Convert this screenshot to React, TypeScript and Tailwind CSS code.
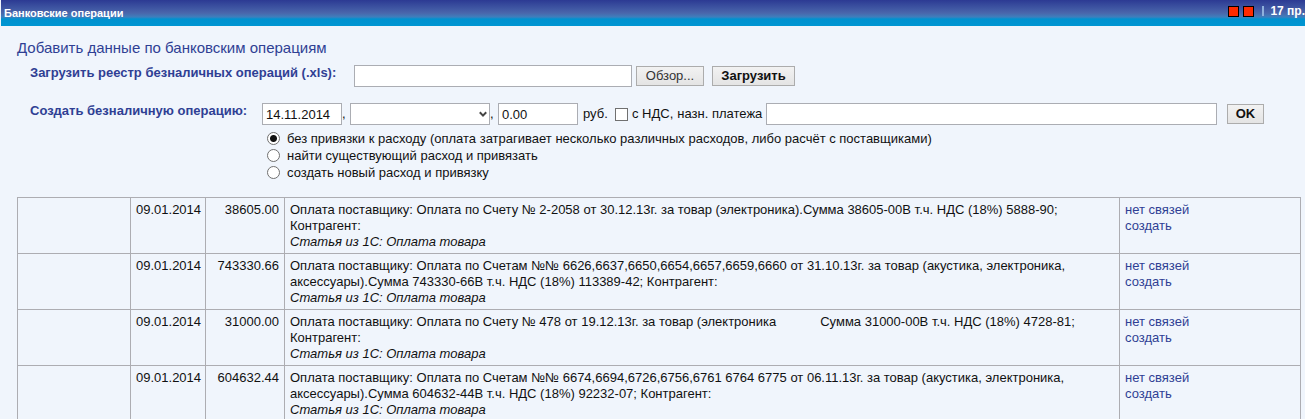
import React from "react";

const operations = [
  {
    amount: "38605.00",
    details: (
      <>
        Оплата поставщику: Оплата по Счету № 2-2058 от 30.12.13г. за товар
        (электроника).Сумма 38605-00В т.ч. НДС (18%) 5888-90;
        <br />
        Контрагент:
      </>
    ),
  },
  {
    amount: "743330.66",
    details: (
      <>
        Оплата поставщику: Оплата по Счетам №№
        6626,6637,6650,6654,6657,6659,6660 от 31.10.13г. за товар (акустика,
        электроника,
        <br />
        аксессуары).Сумма 743330-66В т.ч. НДС (18%) 113389-42; Контрагент:
      </>
    ),
  },
  {
    amount: "31000.00",
    details: (
      <>
        Оплата поставщику: Оплата по Счету № 478 от 19.12.13г. за товар
        (электроника
        <span className="inline-block w-11" />
        Сумма 31000-00В т.ч. НДС (18%) 4728-81;
        <br />
        Контрагент:
      </>
    ),
  },
  {
    amount: "604632.44",
    details: (
      <>
        Оплата поставщику: Оплата по Счетам №№ 6674,6694,6726,6756,6761 6764
        6775 от 06.11.13г. за товар (акустика, электроника,
        <br />
        аксессуары).Сумма 604632-44В т.ч. НДС (18%) 92232-07; Контрагент:
      </>
    ),
  },
];

const bindings = [
  "без привязки к расходу (оплата затрагивает несколько различных расходов, либо расчёт с поставщиками)",
  "найти существующий расход и привязать",
  "создать новый расход и привязку",
];

const field = "h-[22px] border border-[#abadb3] bg-white px-[3px]";
const button =
  "h-5 shrink-0 border border-[#acacac] bg-linear-to-b from-[#f2f2f2] to-[#e4e4e4] leading-4";
const cell = "border border-[#adadb2] px-[5px] pt-1 pb-[3px]";

function Header() {
  return (
    <header className="ml-px flex h-[26px] items-center justify-between bg-[linear-gradient(#2c3a93_0px,#4a66ab_13px,#3f7fbd_17px,#0091cf_19px,#0096d2_26px)] pl-[3px] text-[11px] font-bold text-white">
      <h1>Банковские операции</h1>
      <div className="flex items-center pb-1 text-xs">
        <span className="mr-1 size-[11px] border border-black bg-[#ff2a00]" />
        <span className="mr-2 size-[11px] border border-black bg-[#ff2a00]" />
        <span className="mr-[6px] h-[10px] w-0.5 bg-[#8fb0dc]" />
        <span>17 пр.</span>
      </div>
    </header>
  );
}

function UploadForm() {
  return (
    <form className="mt-2 flex h-[22px] items-center">
      <label
        htmlFor="registry"
        className="w-[324px] shrink-0 self-start font-bold text-[#2f3f94]"
      >
        Загрузить реестр безналичных операций (.xls):
      </label>
      <input id="registry" type="text" className={`${field} w-[278px]`} />
      <button type="button" className={`${button} ml-1 w-[68px] text-[#333]`}>
        Обзор...
      </button>
      <button type="button" className={`${button} ml-2 w-[83px] font-bold`}>
        Загрузить
      </button>
    </form>
  );
}

function CreateForm() {
  return (
    <form className="mt-4 mr-[37px]">
      <div className="flex h-[22px] items-center whitespace-nowrap">
        <label
          htmlFor="date"
          className="w-[232px] shrink-0 self-start font-bold text-[#2f3f94]"
        >
          Создать безналичную операцию:
        </label>
        <input
          id="date"
          type="text"
          defaultValue="14.11.2014"
          className={`${field} w-20`}
        />
        <span className="w-2 shrink-0">,</span>
        <div className="relative w-[140px] shrink-0">
          <select
            aria-label="Счёт"
            className={`${field} block w-full appearance-none`}
          />
          <svg
            viewBox="0 0 8 7"
            className="pointer-events-none absolute top-2 right-[3px] h-[7px] w-2"
          >
            <path
              d="M0.8 1.2 L4 4.6 L7.2 1.2"
              fill="none"
              stroke="#444"
              strokeWidth="2"
            />
          </svg>
        </div>
        <span className="w-2 shrink-0">,</span>
        <input
          aria-label="Сумма"
          type="text"
          defaultValue="0.00"
          className={`${field} w-20`}
        />
        <span className="w-[37px] shrink-0 pl-[5px]">руб.</span>
        <input
          id="vat"
          type="checkbox"
          className="size-[13px] shrink-0 appearance-none border border-[#707070] bg-white"
        />
        <label htmlFor="vat" className="pl-1">
          с НДС,
        </label>
        <label htmlFor="purpose" className="px-1">
          назн. платежа
        </label>
        <input
          id="purpose"
          type="text"
          className={`${field} min-w-0 flex-1`}
        />
        <button
          type="button"
          className={`${button} ml-[10px] w-[37px] font-bold`}
        >
          OK
        </button>
      </div>
      <div className="mt-[5px] ml-[237px]">
        {bindings.map((text, index) => (
          <label key={text} className="flex h-[17px] items-center gap-[7px]">
            <input
              type="radio"
              name="binding"
              defaultChecked={index === 0}
              className="size-[13px] appearance-none rounded-full border border-[#707070] bg-white checked:bg-[radial-gradient(circle,#111_3px,#fff_4px)]"
            />
            {text}
          </label>
        ))}
      </div>
    </form>
  );
}

function OperationsTable() {
  return (
    <table className="w-full table-fixed border-collapse">
      <colgroup>
        <col className="w-[113px]" />
        <col className="w-[75px]" />
        <col className="w-[79px]" />
        <col />
        <col className="w-[181px]" />
      </colgroup>
      <tbody>
        {operations.map((operation) => (
          <tr key={operation.amount} className="align-top">
            <td className={cell} />
            <td className={`${cell} text-right`}>09.01.2014</td>
            <td className={`${cell} text-right`}>{operation.amount}</td>
            <td className={cell}>
              {operation.details}
              <br />
              <i>Статья из 1С: Оплата товара</i>
            </td>
            <td className={`${cell} text-[#2f3f94]`}>
              <a href="#links" className="block">
                нет связей
              </a>
              <a href="#create" className="block">
                создать
              </a>
            </td>
          </tr>
        ))}
      </tbody>
    </table>
  );
}

export default function App() {
  return (
    <div className="h-screen overflow-hidden bg-[#f0f5fc] font-['Liberation_Sans',Arial,sans-serif] text-[13px] leading-4 text-[#111]">
      <Header />
      <main className="pt-3 pr-1 pl-[17px]">
        <h2 className="text-[15px] leading-[19px] text-[#2f3f94]">
          Добавить данные по банковским операциям
        </h2>
        <div className="pl-[13px]">
          <UploadForm />
          <CreateForm />
        </div>
        <div className="mt-4">
          <OperationsTable />
        </div>
      </main>
    </div>
  );
}
